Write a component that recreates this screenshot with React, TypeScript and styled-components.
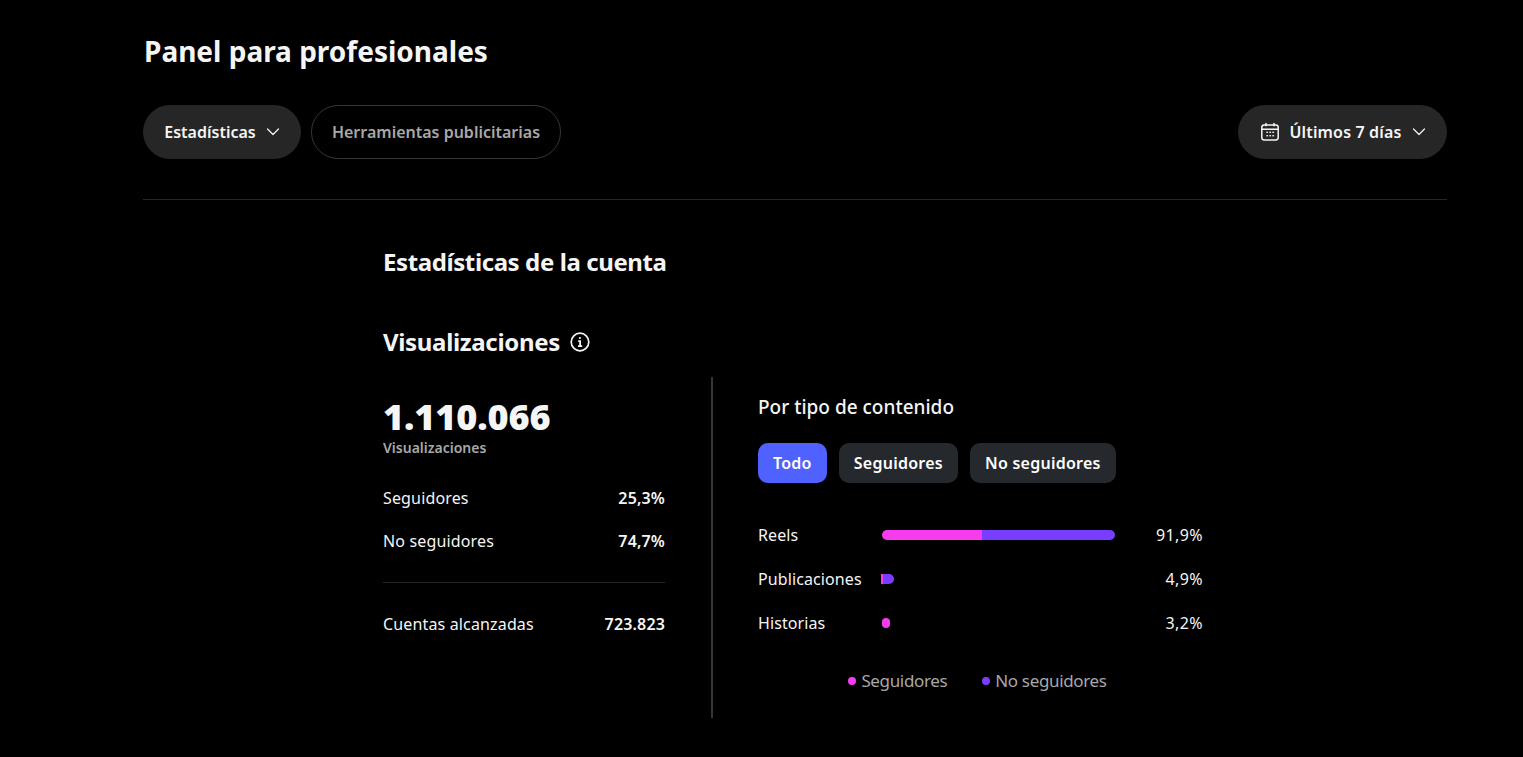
import React from "react";
import styled, { createGlobalStyle } from "styled-components";

const GlobalStyle = createGlobalStyle`
  html, body {
    margin: 0;
    padding: 0;
    background: #000;
    color: #f5f5f5;
    font-family: "Noto Sans", "Open Sans", "Liberation Sans", sans-serif;
  }
`;

const Chevron = () => (
  <svg width="14" height="14" viewBox="0 0 14 14" fill="none" stroke="currentColor" strokeWidth="1.2" strokeLinecap="round" strokeLinejoin="round">
    <path d="M1.5 4 7 9.5 12.5 4" />
  </svg>
);

const CalendarIcon = () => (
  <svg width="20" height="20" viewBox="0 0 20 20" fill="none" stroke="currentColor" strokeWidth="1.5" strokeLinecap="round">
    <rect x="1.8" y="3" width="16.4" height="15" rx="2.4" />
    <path d="M1.8 7.2h16.4M6 1.4v2.4M14 1.4v2.4" />
    <path strokeWidth="1.6" d="M7 10.3h.4M10 10.3h.4M13 10.3h.4M7 13.7h.4M10 13.7h.4M13 13.7h.4" />
  </svg>
);

const InfoIcon = () => (
  <svg width="20" height="20" viewBox="0 0 20 20" fill="none" stroke="currentColor" strokeWidth="1.7">
    <circle cx="10" cy="10" r="8.8" />
    <path strokeWidth="1.8" d="M8.2 9.2H10.1V14.2M8 14.2h4.2" />
    <circle cx="9.9" cy="6" r="1.1" fill="currentColor" stroke="none" />
  </svg>
);

const contentRows = [
  { label: "Reels", value: "91,9%", followers: 100, others: 133, flat: false },
  { label: "Publicaciones", value: "4,9%", followers: 2, others: 11, flat: true },
  { label: "Historias", value: "3,2%", followers: 8, others: 0, flat: false },
];

const App = () => {
  return (
    <Page>
      <GlobalStyle />
      <Title>Panel para profesionales</Title>
      <Toolbar>
        <PillGroup>
          <FilledPill $width={158}>
            Estadísticas <Chevron />
          </FilledPill>
          <OutlinePill>Herramientas publicitarias</OutlinePill>
        </PillGroup>
        <FilledPill $width={209} $spacing={0.15}>
          <CalendarIcon /> Últimos 7 días <Chevron />
        </FilledPill>
      </Toolbar>
      <Divider />
      <Content>
        <SectionTitle>Estadísticas de la cuenta</SectionTitle>
        <MetricHeading>
          Visualizaciones <InfoIcon />
        </MetricHeading>
        <Columns>
          <Summary>
            <BigNumber>1.110.066</BigNumber>
            <BigLabel>Visualizaciones</BigLabel>
            <StatRows>
              <StatRow>
                <span>Seguidores</span>
                <strong>25,3%</strong>
              </StatRow>
              <StatRow>
                <span>No seguidores</span>
                <strong>74,7%</strong>
              </StatRow>
            </StatRows>
            <SummaryRule />
            <StatRow>
              <span>Cuentas alcanzadas</span>
              <strong>723.823</strong>
            </StatRow>
          </Summary>
          <Breakdown>
            <BreakdownTitle>Por tipo de contenido</BreakdownTitle>
            <Tabs>
              <Tab $active>Todo</Tab>
              <Tab>Seguidores</Tab>
              <Tab>No seguidores</Tab>
            </Tabs>
            <Bars>
              {contentRows.map((row) => (
                <BarRow key={row.label}>
                  <BarLabel>{row.label}</BarLabel>
                  <BarTrack>
                    <Bar $flat={row.flat}>
                      {row.followers > 0 && <FollowerPart style={{ width: row.followers }} />}
                      {row.others > 0 && <OtherPart style={{ width: row.others }} />}
                    </Bar>
                  </BarTrack>
                  <BarValue>{row.value}</BarValue>
                </BarRow>
              ))}
            </Bars>
            <Legend>
              <LegendItem $color="#f63cee">Seguidores</LegendItem>
              <LegendItem $color="#7a3cff">No seguidores</LegendItem>
            </Legend>
          </Breakdown>
        </Columns>
      </Content>
    </Page>
  );
};

const Page = styled.div`
  box-sizing: border-box;
  width: 1523px;
  height: 757px;
  overflow: hidden;
  padding: 32px 76px 0 143px;
`;

const Title = styled.h1`
  margin: 0 0 0 1px;
  font-size: 28px;
  line-height: 38px;
  font-weight: 700;
  letter-spacing: 0;
  color: #f5f5f5;
`;

const Toolbar = styled.div`
  display: flex;
  justify-content: space-between;
  margin-top: 35px;
`;

const PillGroup = styled.div`
  display: flex;
  gap: 10px;
`;

const FilledPill = styled.div<{ $width: number; $spacing?: number }>`
  box-sizing: border-box;
  width: ${(p) => p.$width}px;
  height: 54px;
  display: flex;
  align-items: center;
  justify-content: center;
  gap: 10px;
  border-radius: 27px;
  background: #262626;
  font-size: 16px;
  font-weight: 600;
  letter-spacing: ${(p) => p.$spacing ?? 0}px;
  color: #f5f5f5;
`;

const OutlinePill = styled.div`
  box-sizing: border-box;
  width: 250px;
  height: 54px;
  display: flex;
  align-items: center;
  justify-content: center;
  border: 1px solid #363636;
  border-radius: 27px;
  font-size: 16px;
  font-weight: 600;
  letter-spacing: 0;
  color: #a8a8a8;
`;

const Divider = styled.div`
  height: 1px;
  margin-top: 40px;
  background: #262626;
`;

const Content = styled.div`
  margin-left: 240px;
  width: 820px;
`;

const SectionTitle = styled.h2`
  margin: 45px 0 0;
  font-size: 24px;
  line-height: 34px;
  font-weight: 700;
  letter-spacing: -0.4px;
  color: #f5f5f5;
`;

const MetricHeading = styled.div`
  display: flex;
  align-items: center;
  gap: 10px;
  margin-top: 46px;
  font-size: 24px;
  line-height: 34px;
  font-weight: 700;
  letter-spacing: -0.33px;
`;

const Columns = styled.div`
  display: flex;
  margin-top: 18px;
  height: 341px;
`;

const Summary = styled.div`
  box-sizing: border-box;
  width: 330px;
  padding: 17px 46px 0 0;
  border-right: 2px solid #363636;
`;

const BigNumber = styled.div`
  font-size: 36px;
  line-height: 46px;
  font-weight: 900;
  letter-spacing: -0.1px;
  color: #f5f5f5;
`;

const BigLabel = styled.div`
  margin-top: -2px;
  font-size: 14px;
  line-height: 20px;
  font-weight: 600;
  letter-spacing: 0;
  color: #a8a8a8;
`;

const StatRows = styled.div`
  display: flex;
  flex-direction: column;
  gap: 21px;
  margin-top: 29px;
`;

const StatRow = styled.div`
  display: flex;
  justify-content: space-between;
  font-size: 16px;
  line-height: 22px;
  letter-spacing: 0.15px;
  color: #f5f5f5;

  strong {
    font-weight: 600;
  }
`;

const SummaryRule = styled.div`
  height: 1px;
  margin: 30px 0 30px;
  background: #262626;
`;

const Breakdown = styled.div`
  padding: 18px 0 0 45px;
  width: 445px;
`;

const BreakdownTitle = styled.div`
  font-size: 19px;
  line-height: 24px;
  font-weight: 500;
  letter-spacing: 0;
`;

const Tabs = styled.div`
  display: flex;
  gap: 12px;
  margin-top: 24px;
`;

const Tab = styled.div<{ $active?: boolean }>`
  height: 40px;
  padding: 0 15px;
  display: flex;
  align-items: center;
  border-radius: 10px;
  background: ${(p) => (p.$active ? "#4f62ff" : "#25292e")};
  font-size: 16px;
  font-weight: 600;
  letter-spacing: 0.25px;
  color: #fff;
`;

const Bars = styled.div`
  display: flex;
  flex-direction: column;
  gap: 22px;
  margin-top: 41px;
`;

const BarRow = styled.div`
  display: flex;
  align-items: center;
  height: 22px;
  font-size: 16px;
  letter-spacing: 0.1px;
`;

const BarLabel = styled.div`
  width: 124px;
  flex: none;
`;

const BarTrack = styled.div`
  flex: 1;
`;

const Bar = styled.div<{ $flat?: boolean }>`
  display: flex;
  height: 10px;
  width: fit-content;
  margin-left: ${(p) => (p.$flat ? "-1px" : "0")};
  border-radius: ${(p) => (p.$flat ? "0 5px 5px 0" : "5px")};
  overflow: hidden;
`;

const FollowerPart = styled.div`
  background: #f63cee;
`;

const OtherPart = styled.div`
  background: #7a3cff;
`;

const BarValue = styled.div`
  flex: none;
  letter-spacing: 0.4px;
`;

const Legend = styled.div`
  display: flex;
  justify-content: center;
  gap: 35px;
  margin-top: 35px;
  padding-right: 6px;
`;

const LegendItem = styled.div<{ $color: string }>`
  display: flex;
  align-items: center;
  gap: 5px;
  font-size: 17px;
  line-height: 24px;
  letter-spacing: -0.35px;
  color: #a8a8a8;

  &::before {
    content: "";
    width: 8px;
    height: 8px;
    border-radius: 50%;
    background: ${(p) => p.$color};
  }
`;

export default App;
